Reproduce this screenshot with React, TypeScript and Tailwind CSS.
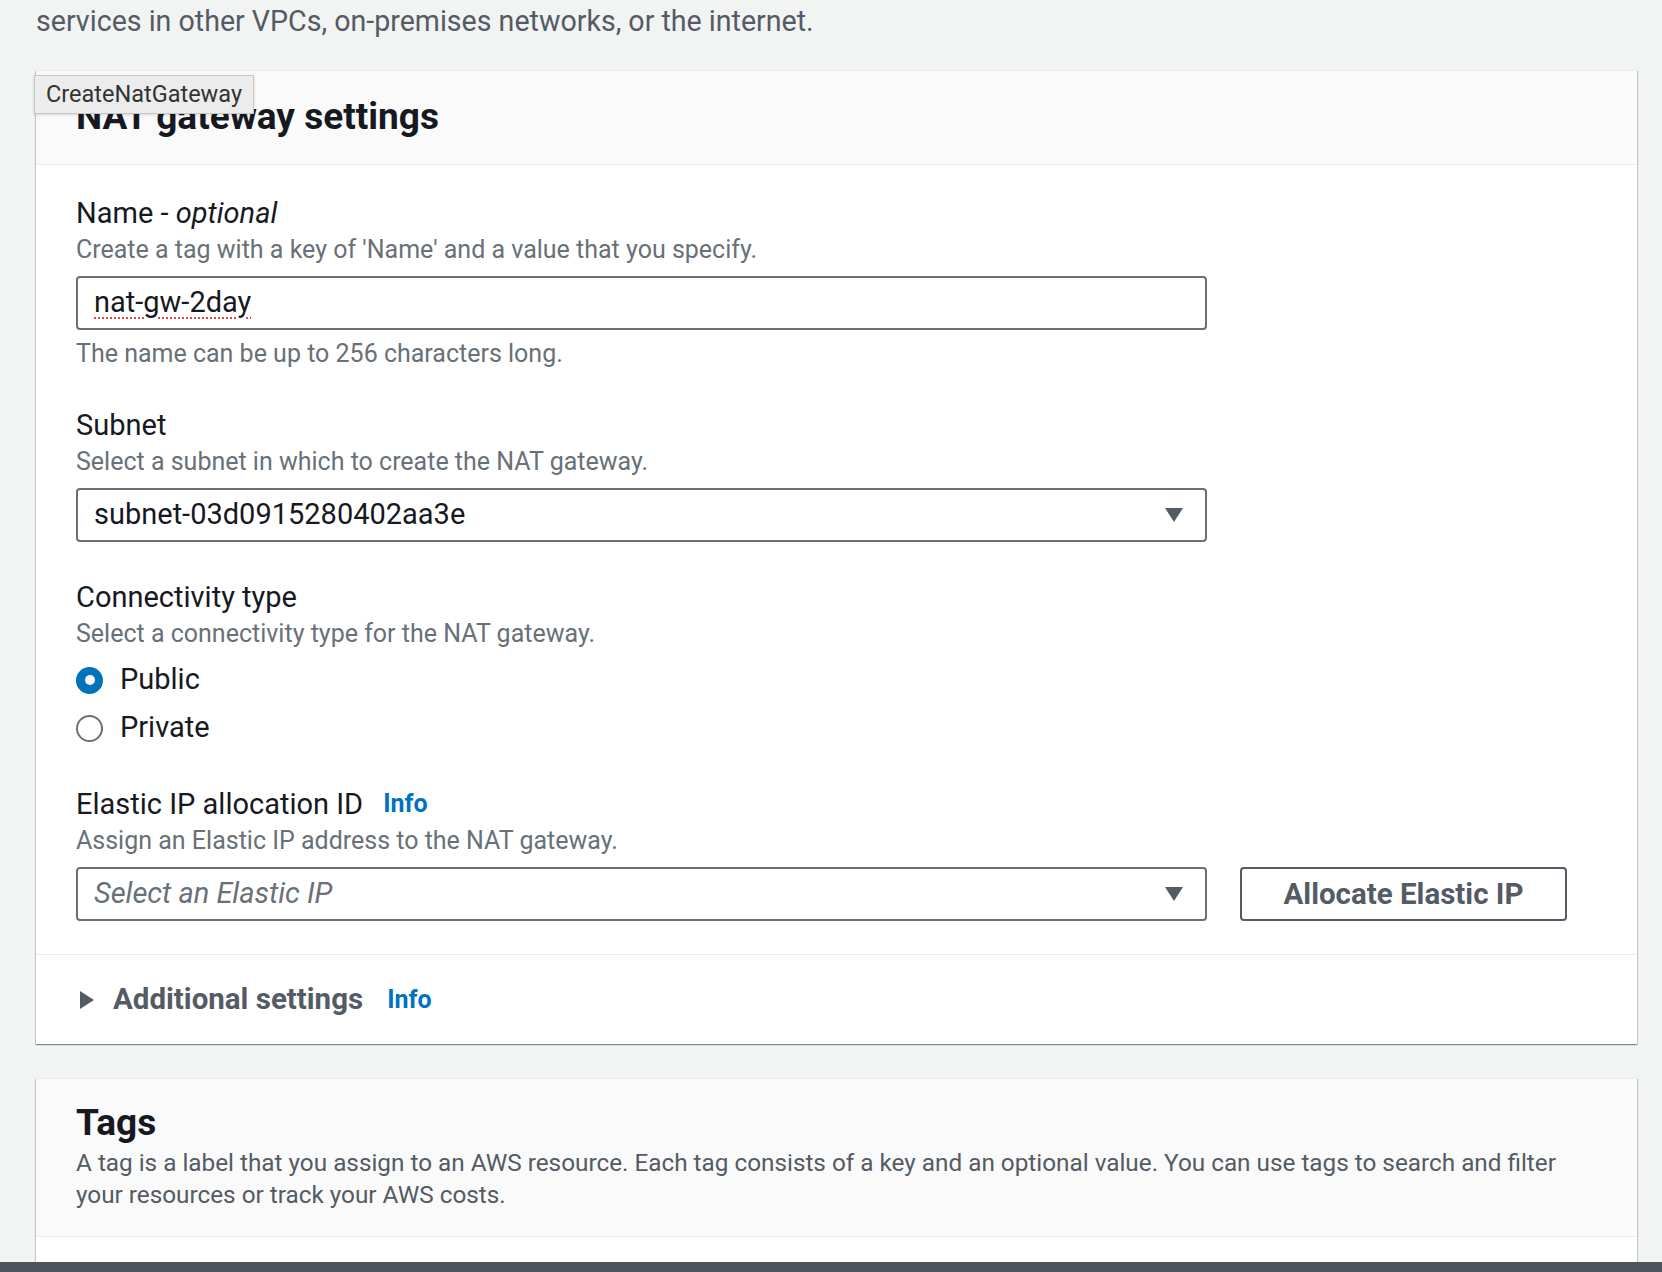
import React, { useState } from 'react'

const font = { fontFamily: 'Roboto, "Noto Sans", sans-serif' }

const Caret: React.FC = () => (
  <svg width="20" height="16" viewBox="0 0 20 16" className="shrink-0">
    <path d="M1 1 H19 L10 15 Z" fill="#545b64" />
  </svg>
)

const InfoLink: React.FC<{ className?: string }> = ({ className }) => (
  <a className={`text-[25px] font-bold leading-[34px] text-[#0073bb] ${className || ''}`}>Info</a>
)

const FieldLabel: React.FC<{ children: React.ReactNode }> = ({ children }) => (
  <div className="text-[29px] leading-[34px] text-[#16191f]">{children}</div>
)

const FieldDesc: React.FC<{ children: React.ReactNode }> = ({ children }) => (
  <div className="mt-[3px] text-[25px] leading-[34px] text-[#687078]">{children}</div>
)

const Radio: React.FC<{ checked: boolean; label: string; onClick: () => void }> = ({ checked, label, onClick }) => (
  <div className="flex h-[40px] items-center gap-[17px] cursor-pointer" onClick={onClick}>
    {checked ? (
      <span className="flex h-[27px] w-[27px] items-center justify-center rounded-full bg-[#0073bb]">
        <span className="h-[10px] w-[10px] rounded-full bg-white" />
      </span>
    ) : (
      <span className="h-[27px] w-[27px] rounded-full border-2 border-[#687078]" />
    )}
    <span className="text-[29px] text-[#16191f]">{label}</span>
  </div>
)

const cardShadow =
  'bg-white border-t border-[#eaeded] shadow-[0_1px_1px_0_rgba(0,28,36,0.3),1px_1px_1px_0_rgba(0,28,36,0.15),-1px_1px_1px_0_rgba(0,28,36,0.15)]'

export default function App() {
  const [conn, setConn] = useState<'public' | 'private'>('public')

  return (
    <div className="flex h-[1272px] flex-col overflow-hidden bg-[#f2f3f3]" style={font}>
      <div className="flex-1 overflow-hidden pl-[36px] pr-[25px]">
        <p className="pt-[3px] text-[28.6px] leading-[36px] text-[#545b64]">
          services in other VPCs, on-premises networks, or the internet.
        </p>

        {/* NAT gateway settings */}
        <div className={`relative mt-[31px] ${cardShadow}`}>
          <div className="border-b border-[#eaeded] bg-[#fafafa] px-[40px] pt-[26px] pb-[27px]">
            <h2 className="text-[37px] font-bold leading-[40px] text-[#16191f]">NAT gateway settings</h2>
          </div>

          <div className="absolute left-[-2px] top-[4px] flex h-[39px] w-[220px] items-center border border-[#c6c6c6] bg-[#ececec] pl-[11px] text-[23.5px] text-[#333] shadow-[0_1px_3px_rgba(0,0,0,0.15)]">
            CreateNatGateway
          </div>

          <div className="border-b border-[#eaeded] px-[40px] pt-[31px] pb-[33px]">
            <FieldLabel>
              Name - <i>optional</i>
            </FieldLabel>
            <FieldDesc>Create a tag with a key of 'Name' and a value that you specify.</FieldDesc>
            <div className="mt-[9px] flex h-[54px] w-[1131px] items-center rounded-[4px] border-2 border-[#687078] px-[16px]">
              <span className="text-[29px] text-[#16191f] underline decoration-dotted decoration-[#e0463b] decoration-2 underline-offset-[5px]">
                nat-gw-2day
              </span>
            </div>
            <div className="mt-[7px] text-[25px] leading-[34px] text-[#687078]">
              The name can be up to 256 characters long.
            </div>

            <div className="mt-[37px]">
              <FieldLabel>Subnet</FieldLabel>
              <FieldDesc>Select a subnet in which to create the NAT gateway.</FieldDesc>
              <div className="mt-[9px] flex h-[54px] w-[1131px] items-center justify-between rounded-[4px] border-2 border-[#687078] pl-[16px] pr-[21px]">
                <span className="text-[29px] text-[#16191f]">subnet-03d0915280402aa3e</span>
                <Caret />
              </div>
            </div>

            <div className="mt-[38px]">
              <FieldLabel>Connectivity type</FieldLabel>
              <FieldDesc>Select a connectivity type for the NAT gateway.</FieldDesc>
              <div className="mt-[9px] flex flex-col gap-[8px]">
                <Radio checked={conn === 'public'} label="Public" onClick={() => setConn('public')} />
                <Radio checked={conn === 'private'} label="Private" onClick={() => setConn('private')} />
              </div>
            </div>

            <div className="mt-[39px]">
              <div className="flex items-center gap-[20px]">
                <FieldLabel>Elastic IP allocation ID</FieldLabel>
                <InfoLink />
              </div>
              <FieldDesc>Assign an Elastic IP address to the NAT gateway.</FieldDesc>
              <div className="mt-[9px] flex items-center gap-[33px]">
                <div className="flex h-[54px] w-[1131px] items-center justify-between rounded-[4px] border-2 border-[#687078] pl-[16px] pr-[21px]">
                  <span className="text-[29px] italic text-[#687078]">Select an Elastic IP</span>
                  <Caret />
                </div>
                <button className="h-[54px] w-[327px] rounded-[4px] border-2 border-[#545b64] text-[29.5px] font-bold text-[#545b64]">
                  Allocate Elastic IP
                </button>
              </div>
            </div>
          </div>

          <div className="flex h-[89px] items-center px-[40px]">
            <svg width="16" height="20" viewBox="0 0 16 20" className="ml-[3px]">
              <path d="M1 1 L15 10 L1 19 Z" fill="#545b64" />
            </svg>
            <span className="ml-[18px] text-[29.5px] font-bold text-[#545b64]">Additional settings</span>
            <InfoLink className="ml-[24px]" />
          </div>
        </div>

        {/* Tags */}
        <div className={`mt-[34px] ${cardShadow}`}>
          <div className="border-b border-[#eaeded] bg-[#fafafa] px-[40px] pt-[24px] pb-[25px]">
            <h2 className="text-[37px] font-bold leading-[40px] text-[#16191f]">Tags</h2>
            <p className="mt-[4px] max-w-[1510px] text-[24.3px] leading-[32px] text-[#545b64]">
              A tag is a label that you assign to an AWS resource. Each tag consists of a key and an optional value. You can use tags to search and filter your resources or track your AWS costs.
            </p>
          </div>
          <div className="h-[80px]" />
        </div>
      </div>
      <div className="h-[10px] shrink-0 bg-[#4d535b]" />
    </div>
  )
}
